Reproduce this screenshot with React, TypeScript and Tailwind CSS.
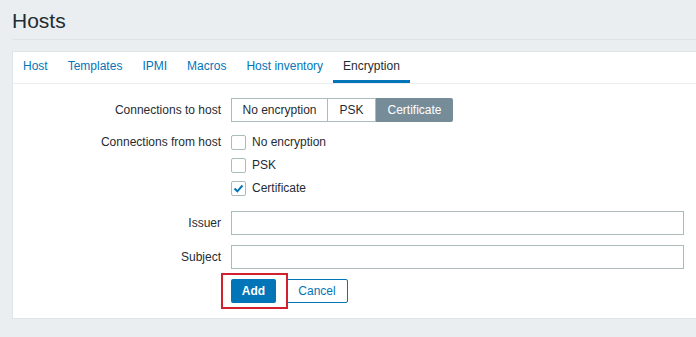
import React from 'react';

const tabs = ['Host', 'Templates', 'IPMI', 'Macros', 'Host inventory', 'Encryption'];

const Checkbox = ({ label, checked }: { label: string; checked?: boolean }) => (
  <label className="flex h-[23px] items-center gap-[6px]">
    <span className="flex h-[15px] w-[15px] items-center justify-center rounded-[2px] border border-[#acbbbc] bg-white">
      {checked && (
        <svg width="11" height="11" viewBox="0 0 11 11">
          <path d="M1.5 5.5 L4.3 8.3 L9.5 2.5" fill="none" stroke="#0275b8" strokeWidth="2" />
        </svg>
      )}
    </span>
    <span>{label}</span>
  </label>
);

const Row = ({ label, children, className = '' }: { label: string; children: React.ReactNode; className?: string }) => (
  <div className={`flex gap-[10px] ${className}`}>
    <div className="w-[208px] shrink-0 text-right">{label}</div>
    <div className="flex-1">{children}</div>
  </div>
);

export default function App() {
  return (
    <div className="h-[337px] w-[696px] overflow-hidden bg-[#ebeef0] font-['Liberation_Sans',Arial,sans-serif] text-[12px] text-[#1f2c33]">
      <div className="ml-3 border-b border-[#dfe3e6] pb-[6px] pt-[9px]">
        <h1 className="text-[21px] leading-[24px] text-[#1f2c33]">Hosts</h1>
      </div>
      <div className="ml-3 mt-[11px] border border-r-0 border-[#dfe4e7] bg-white pb-[15px]">
        <div className="flex h-[32px] border-b border-[#ebeef0]">
          {tabs.map((tab) => (
            <div
              key={tab}
              className={`flex items-center border-b-[3px] px-[10px] ${
                tab === 'Encryption' ? 'border-[#0275b8] text-[#1f2c33]' : 'border-transparent text-[#0275b8]'
              }`}
            >
              {tab}
            </div>
          ))}
        </div>

        <div className="mt-[14px] flex flex-col">
          <Row label="Connections to host" className="items-center">
            <div className="flex h-[24px] w-fit">
              <div className="flex w-[97px] items-center justify-center border border-[#acbbbc] bg-white">No encryption</div>
              <div className="flex w-[48px] items-center justify-center border border-l-0 border-[#acbbbc] bg-white">PSK</div>
              <div className="flex w-[77px] items-center justify-center rounded-r-[2px] bg-[#768d99] text-white">Certificate</div>
            </div>
          </Row>

          <Row label="Connections from host" className="mt-[9px] leading-[23px]">
            <div className="flex flex-col">
              <Checkbox label="No encryption" />
              <Checkbox label="PSK" />
              <Checkbox label="Certificate" checked />
            </div>
          </Row>

          <Row label="Issuer" className="mt-[11px] items-center">
            <input className="h-[24px] w-[453px] border border-[#acbbbc] bg-white px-[5px] outline-none" />
          </Row>

          <Row label="Subject" className="mt-[10px] items-center">
            <input className="h-[24px] w-[453px] border border-[#acbbbc] bg-white px-[5px] outline-none" />
          </Row>

          <Row label="" className="mt-[10px]">
            <div className="relative flex gap-[10px]">
              <button className="h-[24px] w-[45px] rounded-[2px] bg-[#0275b8] font-bold text-white">Add</button>
              <button className="h-[24px] w-[62px] rounded-[2px] border border-[#0275b8] bg-white text-[#0275b8]">Cancel</button>
              <div className="pointer-events-none absolute left-[-10px] top-[-6px] h-[36px] w-[67px] border-2 border-[#d3202e]" />
            </div>
          </Row>
        </div>
      </div>
    </div>
  );
}
